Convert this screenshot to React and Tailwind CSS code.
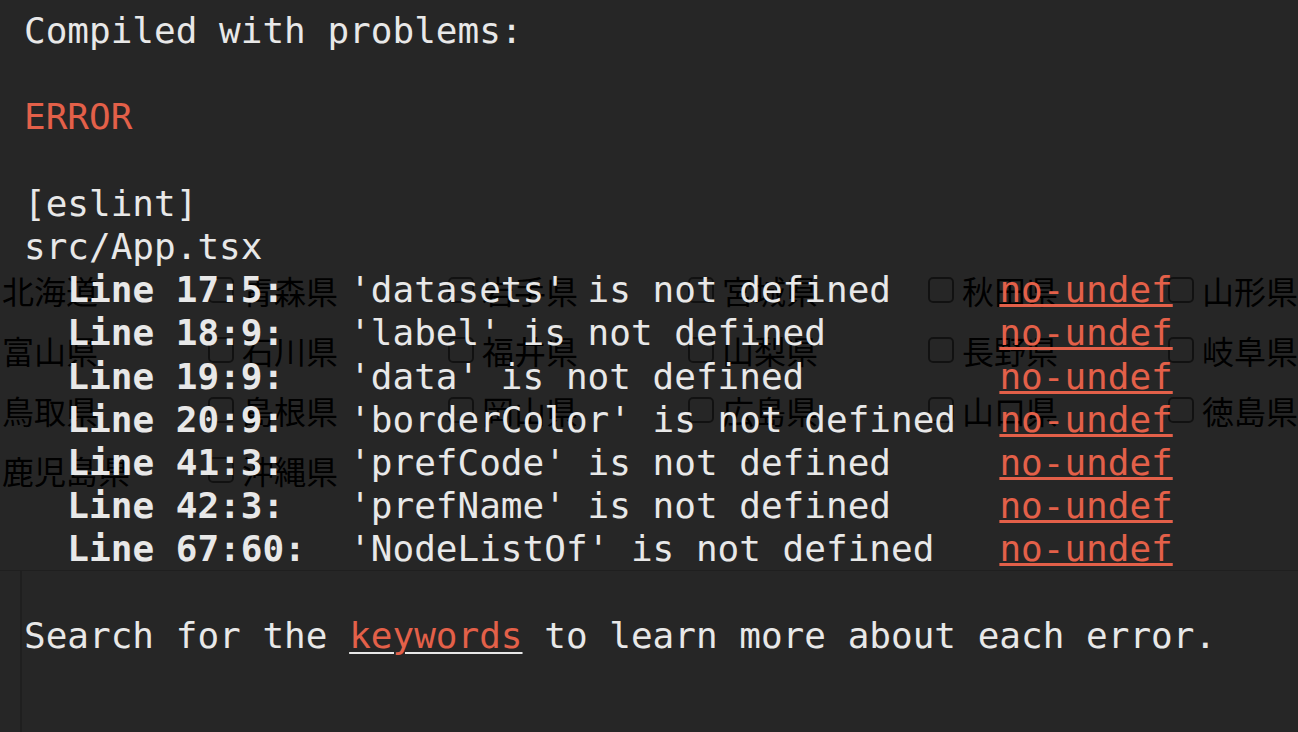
import React from "react";

const rows = [
  ["北海道", "青森県", "岩手県", "宮城県", "秋田県", "山形県", "福島県", "茨城県", "栃木県", "群馬県", "埼玉県", "千葉県", "東京都", "神奈川県", "新潟県"],
  ["富山県", "石川県", "福井県", "山梨県", "長野県", "岐阜県", "静岡県", "愛知県", "三重県", "滋賀県", "京都府", "大阪府", "兵庫県", "奈良県", "和歌山県"],
  ["鳥取県", "島根県", "岡山県", "広島県", "山口県", "徳島県", "香川県", "愛媛県", "高知県", "福岡県", "佐賀県", "長崎県", "熊本県", "大分県", "宮崎県"],
  ["鹿児島県", "沖縄県"],
];

const errors = [
  ["Line 17:5:", "   ", "'datasets' is not defined", "     "],
  ["Line 18:9:", "   ", "'label' is not defined", "        "],
  ["Line 19:9:", "   ", "'data' is not defined", "         "],
  ["Line 20:9:", "   ", "'borderColor' is not defined", "  "],
  ["Line 41:3:", "   ", "'prefCode' is not defined", "     "],
  ["Line 42:3:", "   ", "'prefName' is not defined", "     "],
  ["Line 67:60:", "  ", "'NodeListOf' is not defined", "   "],
];

export default function App() {
  return (
    <div className="relative w-[1298px] h-[732px] overflow-hidden bg-white">
      {/* underlying page */}
      <div className="pt-[260px] font-['Noto_Sans_CJK_JP',sans-serif] text-[32px] text-black">
        <div className="ml-[-32px] flex flex-col">
          {rows.map((row, i) => (
            <div key={i} className="flex h-[60px] items-center">
              {row.map((name) => (
                <label key={name} className="flex w-[240px] shrink-0 items-center">
                  <span className="h-[26px] w-[26px] shrink-0 rounded-[5px] border-2 border-[#767676] bg-white" />
                  <span className="ml-[8px] whitespace-nowrap leading-none">{name}</span>
                </label>
              ))}
            </div>
          ))}
        </div>
        <div className="mt-[70px] border-t border-[#cfcfcf]">
          <div className="ml-[20px] h-[200px] border-l-2 border-[#cfcfcf]" />
        </div>
      </div>

      {/* error overlay */}
      <div className="absolute inset-0 bg-[rgba(0,0,0,0.85)] pl-[24px] pt-[9px] font-['DejaVu_Sans_Mono',monospace] text-[36px] leading-[1.2] text-[#e8e8e8] whitespace-pre">
        <div>Compiled with problems:</div>
        <div>{" "}</div>
        <div className="text-[#e36049]">ERROR</div>
        <div>{" "}</div>
        <div>[eslint]</div>
        <div>src/App.tsx</div>
        {errors.map(([loc, gap1, msg, gap2]) => (
          <div key={loc}>
            {"  "}
            <span className="font-bold">{loc}</span>
            {gap1}
            {msg}
            {gap2}
            <span className="text-[#e36049] underline decoration-[3px] underline-offset-[2px]">no-undef</span>
          </div>
        ))}
        <div>{" "}</div>
        <div>
          Search for the{" "}
          <span className="text-[#e36049] underline decoration-[#e8e8e8] decoration-[2px] underline-offset-[4px]">keywords</span>{" "}
          to learn more about each error.
        </div>
      </div>
    </div>
  );
}
